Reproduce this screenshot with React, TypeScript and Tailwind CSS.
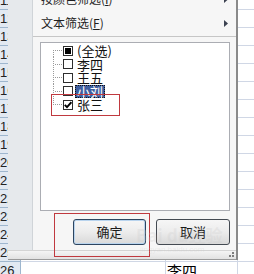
import React from "react";

const sheetRows = Array.from({ length: 16 }, (_, i) => 11 + i);

function Sheet() {
  return (
    <div className="flex flex-col -mt-[8px]">
      {sheetRows.map((n) => (
        <div key={n} className="flex h-[18px]">
          <div className="w-[21px] shrink-0 border-r border-b border-[#9eb6ce] bg-[#e2e9f2] text-[13px] leading-[17px] pl-0 text-[#222] [font-family:'Liberation_Sans',sans-serif]">
            {n}
          </div>
          <div className="w-[145px] shrink-0 border-r border-b border-[#d0d7e5]" />
          <div className="w-[72px] shrink-0 border-r border-b border-[#d0d7e5] text-[15px] leading-[17px] pl-[1px] text-black">
            {n === 26 ? "李四" : ""}
          </div>
          <div className="flex-1 border-b border-[#d0d7e5]" />
        </div>
      ))}
    </div>
  );
}

function Arrow() {
  return (
    <svg width="4" height="7" viewBox="0 0 4 7" className="shrink-0">
      <path d="M0 0 L4 3.5 L0 7 Z" fill="#3b4150" />
    </svg>
  );
}

function MenuItem({ label, acc }: { label: string; acc: string }) {
  return (
    <div className="h-[24px] flex items-center justify-between pl-[8px] pr-[8px] text-[12px] text-[#1e1e1e]">
      <span>
        {label}(<span className="underline">{acc}</span>)
      </span>
      <Arrow />
    </div>
  );
}

function Box({ state }: { state: "none" | "part" | "check" }) {
  return (
    <div className="w-[10px] h-[10px] shrink-0 border border-[#2e2e2e] bg-white flex items-center justify-center">
      {state === "part" && <div className="w-[6px] h-[6px] bg-black" />}
      {state === "check" && (
        <svg width="8" height="8" viewBox="0 0 8 8">
          <path d="M0.8 3.8 L3 6.2 L7.4 1.2" fill="none" stroke="#000" strokeWidth="1.9" />
        </svg>
      )}
    </div>
  );
}

function Conn({ pos, h }: { pos: "first" | "mid" | "last"; h: number }) {
  const mid = Math.floor(h / 2);
  const y1 = pos === "first" ? mid : 0;
  const y2 = pos === "last" ? mid + 1 : h;
  return (
    <svg width="10" height={h} className="shrink-0">
      <line x1="0.5" y1={y1} x2="0.5" y2={y2} stroke="#9a9a9a" strokeDasharray="1 1" />
      <line x1="2" y1={mid + 0.5} x2="10" y2={mid + 0.5} stroke="#9a9a9a" strokeDasharray="1 1" />
    </svg>
  );
}

const items: {
  label: string;
  state: "none" | "part" | "check";
  pos: "first" | "mid" | "last";
  h: number;
  cls: string;
  sel?: boolean;
}[] = [
  { label: "(全选)", state: "part", pos: "first", h: 13, cls: "h-[13px]" },
  { label: "李四", state: "none", pos: "mid", h: 14, cls: "h-[14px]" },
  { label: "王五", state: "none", pos: "mid", h: 13, cls: "h-[13px]" },
  { label: "小刘", state: "none", pos: "mid", h: 14, cls: "h-[14px]", sel: true },
  { label: "张三", state: "check", pos: "last", h: 13, cls: "h-[13px]" },
];

function ListBox() {
  return (
    <div className="ml-[7px] mt-[4px] w-[190px] h-[169px] border border-[#abadb3] bg-white pt-[1px] pl-[12px] flex flex-col">
      {items.map((it) => (
        <div key={it.label} className={`flex items-center ${it.cls}`}>
          <Conn pos={it.pos} h={it.h} />
          <Box state={it.state} />
          <span
            className={
              it.sel
                ? "ml-[2px] px-[1px] h-[13px] leading-[12px] text-[13px] bg-[#3f5f9f] text-white border border-dotted border-[#111]"
                : "ml-[2px] px-[2px] h-[13px] leading-[13px] text-[13px] text-[#111]"
            }
          >
            {it.label}
          </span>
        </div>
      ))}
    </div>
  );
}

function Buttons() {
  return (
    <div className="mt-[8px] mb-[5px] flex justify-end gap-[10px] pr-[6px]">
      <div className="w-[73px] h-[26px] rounded-[3px] border border-[#2d4560] bg-gradient-to-b from-[#f6f6f6] via-[#ececec] to-[#d9d9d9] shadow-[inset_0_0_0_1px_#b9d4ee] flex items-center justify-center text-[13px] text-[#1a1a1a]">
        确定
      </div>
      <div className="w-[74px] h-[26px] rounded-[3px] border border-[#444a52] bg-gradient-to-b from-[#f6f6f6] via-[#ececec] to-[#d9d9d9] flex items-center justify-center text-[13px] text-[#1a1a1a]">
        取消
      </div>
    </div>
  );
}

function BottomBar() {
  return (
    <div className="h-[10px] border-t border-[#d4d4d4] border-b border-b-[#9a9a9a] bg-gradient-to-b from-[#f4f4f4] to-[#e2e2e2] flex items-end justify-end pr-[2px] pb-[1px]">
      <svg width="7" height="6" viewBox="0 0 7 6">
        <rect x="5" y="0" width="2" height="2" fill="#7d7d7d" />
        <rect x="2" y="3" width="2" height="2" fill="#7d7d7d" />
        <rect x="5" y="3" width="2" height="2" fill="#7d7d7d" />
      </svg>
    </div>
  );
}

export default function App() {
  return (
    <div className="relative w-[254px] h-[274px] overflow-hidden bg-white [font-family:'Noto_Sans_CJK_SC','Liberation_Sans',sans-serif]">
      <Sheet />

      {/* filter dropdown menu */}
      <div className="absolute left-[8px] top-[-13px] w-[230px] flex flex-col border-r-2 border-[#8a8a8a] bg-[#f6f6f6]">
        <div className="flex">
          <div className="w-[25px] shrink-0 bg-[#e6e9ec] border-r border-[#d0d4d8]" />
          <div className="flex-1 flex flex-col">
            <MenuItem label="按颜色筛选" acc="I" />
            <MenuItem label="文本筛选" acc="F" />
            <div className="h-[3px] flex items-center">
              <div className="h-px w-full bg-[#c6c6c6]" />
            </div>
            <ListBox />
            <Buttons />
          </div>
        </div>
        <BottomBar />
      </div>

      {/* annotation rectangles */}
      <div className="absolute left-[51px] top-[94px] w-[69px] h-[22px] border border-[#c0393f]" />
      <div className="absolute left-[54px] top-[213px] w-[96px] h-[44px] border border-[#c0393f]" />

      {/* faint watermark */}
      <div className="absolute left-[136px] top-[226px] text-[17px] font-bold leading-[18px] text-[#c9c9c9]/25 pointer-events-none">
        Bai du经验
      </div>
      <div className="absolute left-[140px] top-[246px] text-[8px] leading-[8px] text-[#c9c9c9]/25 pointer-events-none [font-family:'Liberation_Sans',sans-serif]">
        jingyan.baidu.com
      </div>
    </div>
  );
}
